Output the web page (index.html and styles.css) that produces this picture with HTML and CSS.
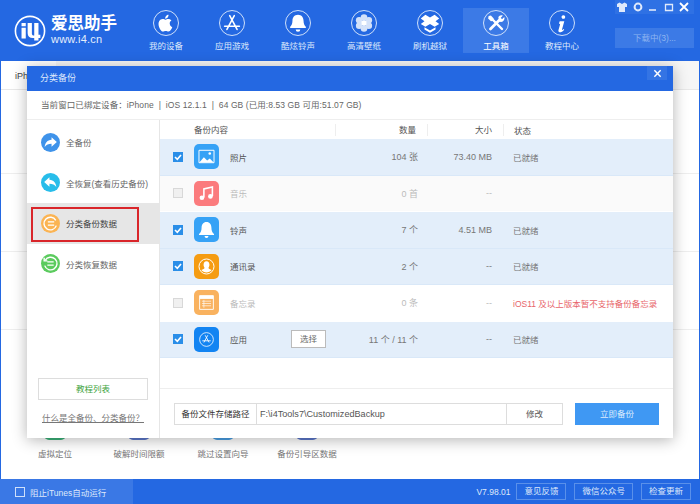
FILE: index.html
```html
<!DOCTYPE html>
<html lang="zh">
<head>
<meta charset="utf-8">
<title>爱思助手</title>
<link rel="stylesheet" href="styles.css">
</head>
<body>
<div class="app">
  <header class="top">
    <div class="logo">
      <svg class="logo-mark" viewBox="0 0 34 34"><circle cx="17" cy="17" r="15.500" fill="none" stroke="#fff" stroke-width="1.700"/><path d="M8 13.500h4.500V25H8zM8 8.500h4.500V12H8z" fill="#fff"/><path d="M14.500 8.500H19V20c0 1.500 1.200 1.800 2.500 1.800V8.500H26V21h2v3.500h-2V27h-4.500v-2.500H20c-3.500 0-5.500-1.500-5.500-5z" fill="#fff"/></svg>
      <div class="logo-text"><div class="logo-cn">爱思助手</div><div class="logo-url">www.i4.cn</div></div>
    </div>
    <nav class="nav">
      <div class="nav-item"><span class="nav-ic"><svg viewBox="0 0 26 26"><path d="M17 13.500c0-2.200 1.800-3 1.900-3.100-1-1.500-2.700-1.700-3.200-1.700-1.400-.1-2.600.8-3.300.8s-1.800-.8-3-.8c-1.500 0-3 .9-3.700 2.200-1.600 2.800-.4 6.900 1.100 9.100.8 1.100 1.700 2.300 2.900 2.300s1.600-.7 3-.7 1.800.7 3 .7 2-1.100 2.800-2.200c.9-1.300 1.200-2.500 1.300-2.600-.1 0-2.800-1.100-2.800-4zM14.800 7c.6-.8 1.100-1.800.9-2.900-.9 0-2 .6-2.600 1.400-.6.700-1.100 1.800-1 2.800 1 .1 2-.5 2.700-1.300z" fill="#fff"/></svg></span><span>我的设备</span></div>
      <div class="nav-item"><span class="nav-ic"><svg viewBox="0 0 26 26"><path d="M10.500 5l8 15M15.500 5l-8 15M5 16.500h16" fill="none" stroke="#fff" stroke-width="1.700" stroke-linecap="round"/></svg></span><span>应用游戏</span></div>
      <div class="nav-item"><span class="nav-ic"><svg viewBox="0 0 26 26"><path d="M13 4c-4 0-6 3-6 6.500 0 4-1.500 5.500-2.500 6.500v1.500h17V17c-1-1-2.500-2.500-2.500-6.500C19 7 17 4 13 4zM10.500 20a2.500 2.500 0 0 0 5 0z" fill="#fff"/></svg></span><span>酷炫铃声</span></div>
      <div class="nav-item"><span class="nav-ic"><svg viewBox="0 0 26 26"><g fill="#fff" opacity=".8"><circle cx="13" cy="7" r="3.600"/><circle cx="13" cy="19" r="3.600"/><circle cx="7.800" cy="10" r="3.600"/><circle cx="18.200" cy="10" r="3.600"/><circle cx="7.800" cy="16" r="3.600"/><circle cx="18.200" cy="16" r="3.600"/></g><circle cx="13" cy="13" r="3" fill="#fff"/></svg></span><span>高清壁纸</span></div>
      <div class="nav-item"><span class="nav-ic"><svg viewBox="0 0 26 26"><path d="M8 4l5 3 5-3 5 4-4 3 4 3-5 3-5-3-5 3-5-3 4-3-4-3z" fill="#fff"/><path d="M7 17.500l6 3.500 6-3.500V20l-6 3.500L7 20z" fill="#fff"/></svg></span><span>刷机越狱</span></div>
      <div class="nav-item active"><span class="nav-ic"><svg viewBox="0 0 26 26"><path d="M7 19.500L17.500 9" fill="none" stroke="#fff" stroke-width="3" stroke-linecap="round"/><path d="M15.500 6.500a4 4 0 0 1 5-1.500l-2.500 2.500 1.500 1.500L22 6.500a4 4 0 0 1-5.500 5z" fill="#fff"/><path d="M19.500 19.500L9.500 9.500" fill="none" stroke="#fff" stroke-width="2.600" stroke-linecap="round"/><path d="M5 5.500L7.500 5l3 3-.5 2.500-2.500.5-3-3z" fill="#fff"/></svg></span><span>工具箱</span></div>
      <div class="nav-item"><span class="nav-ic"><svg viewBox="0 0 26 26"><path d="M14.500 4.500a2 2 0 1 1-.01 0zM10.500 11h5l-2.500 9c-.2.700.3.800 1.800-.5l.6.700c-1.800 2-3.200 2.800-4.800 2.800-1.300 0-1.800-1-1.400-2.300l1.700-6.200c.2-.8-.4-.9-1.300-.6z" fill="#fff"/></svg></span><span>教程中心</span></div>
    </nav>
    <div class="win">
      <div class="win-btns">
        <svg viewBox="0 0 12 12"><path d="M3.500 1.500L1 3v3h2v5h6V6h2V3L8.500 1.500 6 3z" fill="#dfe9fb"/></svg>
        <svg viewBox="0 0 12 12"><circle cx="6" cy="6" r="3.400" fill="none" stroke="#dfe9fb" stroke-width="2"/></svg>
        <svg viewBox="0 0 12 12"><path d="M2 9h7" stroke="#dfe9fb" stroke-width="1.600"/></svg>
        <svg viewBox="0 0 12 12"><path d="M2.500 3.500h7v6h-7z" fill="none" stroke="#dfe9fb" stroke-width="1.300"/></svg>
        <svg viewBox="0 0 12 12"><path d="M2 2l8 8M10 2l-8 8" stroke="#fff" stroke-width="1.800"/></svg>
      </div>
      <div class="download">下载中(3)...</div>
    </div>
  </header>

  <main class="page">
    <div class="page-head"><div class="page-tab">iPh</div></div>
    <div class="page-rows">
      <div class="page-row"></div>
      <div class="page-row"></div>
      <div class="page-row"></div>
    </div>
    <div class="tool-labels">
      <span class="tool-label"><i class="peek peek-green"></i>虚拟定位</span>
      <span class="tool-label"><i class="peek peek-indigo"></i>破解时间限额</span>
      <span class="tool-label"><i class="peek peek-sky"></i>跳过设置向导</span>
      <span class="tool-label"><i class="peek peek-indigo"></i>备份引导区数据</span>
    </div>
  </main>

  <footer class="bottom">
    <div class="itunes"><i class="box"></i><span>阻止iTunes自动运行</span></div>
    <div class="bottom-right">
      <span class="version">V7.98.01</span>
      <span class="bottom-btn">意见反馈</span>
      <span class="bottom-btn">微信公众号</span>
      <span class="bottom-btn">检查更新</span>
    </div>
  </footer>

  <section class="modal">
    <div class="modal-title"><span>分类备份</span><span class="modal-close"><svg viewBox="0 0 10 10"><path d="M1.500 1.500l7 7M8.500 1.500l-7 7" stroke="#fff" stroke-width="1.600"/></svg></span></div>
    <div class="modal-info">当前窗口已绑定设备：iPhone&nbsp; |&nbsp; iOS 12.1.1&nbsp; |&nbsp; 64 GB (已用:8.53 GB 可用:51.07 GB)</div>
    <div class="modal-body">
      <aside class="side">
        <div class="side-item"><span class="side-ic ic-blue"><svg viewBox="0 0 18 18"><path d="M10 4l5 4.500-5 4.500v-2.800c-3 0-5 .8-6.500 3 .3-3.500 2.500-6.500 6.500-6.700z" fill="#fff"/></svg></span><span>全备份</span></div>
        <div class="side-item"><span class="side-ic ic-cyan"><svg viewBox="0 0 18 18"><path d="M8 4L3 8.500 8 13v-2.800c3 0 5 .8 6.500 3-.3-3.500-2.500-6.500-6.500-6.700z" fill="#fff"/></svg></span><span>全恢复(查看历史备份)</span></div>
        <div class="side-item current"><span class="side-ic ic-orange"><svg viewBox="0 0 18 18"><path d="M14 6a6 6 0 1 0 .5 5" fill="none" stroke="#fff" stroke-width="1.300"/><path d="M6.500 7.500h6M6.500 10.500h6" stroke="#fff" stroke-width="1.300"/></svg></span><span>分类备份数据</span></div>
        <div class="side-item"><span class="side-ic ic-green"><svg viewBox="0 0 18 18"><path d="M4 6a6 6 0 1 1-.5 5" fill="none" stroke="#fff" stroke-width="1.300"/><path d="M6 7.500h6M6 10.500h6M3 3.500v3h3" fill="none" stroke="#fff" stroke-width="1.300"/></svg></span><span>分类恢复数据</span></div>
        <div class="side-foot">
          <div class="tutorial">教程列表</div>
          <a class="what">什么是全备份、分类备份？</a>
        </div>
      </aside>
      <div class="content">
        <div class="thead">
          <span class="h-name">备份内容</span>
          <span class="h-col h-count">数量</span>
          <span class="h-col h-size">大小</span>
          <span class="h-state">状态</span>
        </div>
        <div class="row on">
          <i class="check"><svg viewBox="0 0 10 10"><path d="M2 5l2.300 2.300L8 3" fill="none" stroke="#fff" stroke-width="1.600"/></svg></i>
          <span class="app-ic a-blue"><svg viewBox="0 0 26 26"><path d="M1.500 3.500h23v19h-23z" fill="none" stroke="#fff" stroke-width="1.500"/><path d="M2 22l7-8 5 5 4-3 6 6z" fill="#fff"/><circle cx="18" cy="8.500" r="2" fill="#fff"/></svg></span>
          <span class="r-name">照片</span>
          <span class="c-count">104 张</span>
          <span class="c-size">73.40 MB</span>
          <span class="c-state">已就绪</span>
        </div>
        <div class="row off grey">
          <i class="check"></i>
          <span class="app-ic a-red"><svg viewBox="0 0 26 26"><path d="M9 19V6l13-3v14" fill="none" stroke="#fff" stroke-width="2.400"/><circle cx="6" cy="19.500" r="3.600" fill="#fff"/><circle cx="19" cy="17.500" r="3.600" fill="#fff"/></svg></span>
          <span class="r-name">音乐</span>
          <span class="c-count">0 首</span>
          <span class="c-size">--</span>
          <span class="c-state"></span>
        </div>
        <div class="row on">
          <i class="check"><svg viewBox="0 0 10 10"><path d="M2 5l2.300 2.300L8 3" fill="none" stroke="#fff" stroke-width="1.600"/></svg></i>
          <span class="app-ic a-blue"><svg viewBox="0 0 26 26"><path d="M13 1.500c-5 0-7.500 4-7.500 8.500 0 5-1.500 8-4 10v1.500h23V20c-2.500-2-4-5-4-10 0-4.500-2.500-8.500-7.500-8.500zM10 23a3 3 0 0 0 6 0z" fill="#fff"/></svg></span>
          <span class="r-name">铃声</span>
          <span class="c-count">7 个</span>
          <span class="c-size">4.51 MB</span>
          <span class="c-state">已就绪</span>
        </div>
        <div class="row on">
          <i class="check"><svg viewBox="0 0 10 10"><path d="M2 5l2.300 2.300L8 3" fill="none" stroke="#fff" stroke-width="1.600"/></svg></i>
          <span class="app-ic a-amber"><svg viewBox="0 0 26 26"><circle cx="13" cy="13" r="11.500" fill="none" stroke="#fff" stroke-width="1.500"/><path d="M13 5c-3 0-4.500 2.500-4.500 5.500 0 2 1 3.500 1.500 4.500 0 1.500-2 2-5 3.500 2 2.500 5 3.500 8 3.500s6-1 8-3.500c-3-1.500-5-2-5-3.500.5-1 1.500-2.500 1.500-4.500C17.500 7.500 16 5 13 5z" fill="#fff"/></svg></span>
          <span class="r-name">通讯录</span>
          <span class="c-count">2 个</span>
          <span class="c-size">--</span>
          <span class="c-state">已就绪</span>
        </div>
        <div class="row off">
          <i class="check"></i>
          <span class="app-ic a-peach"><svg viewBox="0 0 26 26"><path d="M2.500 2.500h21v21h-21z" fill="none" stroke="#fff" stroke-width="1.400"/><path d="M2.500 2.500h21v5h-21z" fill="#fff"/><path d="M6 11h14M6 14.500h14M6 18h14M9 9v12" stroke="#fff"/></svg></span>
          <span class="r-name">备忘录</span>
          <span class="c-count">0 条</span>
          <span class="c-size">--</span>
          <span class="c-state warn">iOS11 及以上版本暂不支持备份备忘录</span>
        </div>
        <div class="row on">
          <i class="check"><svg viewBox="0 0 10 10"><path d="M2 5l2.300 2.300L8 3" fill="none" stroke="#fff" stroke-width="1.600"/></svg></i>
          <span class="app-ic a-deep"><svg viewBox="0 0 26 26"><circle cx="13" cy="13" r="10.500" fill="none" stroke="#fff" stroke-width="1.200"/><path d="M11 6.500l6 11M15 6.500l-6 11M6.500 15h13" fill="none" stroke="#fff" stroke-width="1.300"/></svg></span>
          <span class="r-name r-narrow">应用</span>
          <span class="pick">选择</span>
          <span class="c-count c-count-wide">11 个 / 11 个</span>
          <span class="c-size">--</span>
          <span class="c-state">已就绪</span>
        </div>
        <div class="path-bar">
          <div class="path">
            <span class="path-label">备份文件存储路径</span>
            <span class="path-value">F:\i4Tools7\CustomizedBackup</span>
            <span class="path-edit">修改</span>
          </div>
          <div class="start">立即备份</div>
        </div>
      </div>
    </div>
  </section>
</div>
</body>
</html>
```

FILE: styles.css
```css
* { box-sizing: border-box; }
html, body { margin: 0; padding: 0; }
body { font-family: "Liberation Sans", "Noto Sans CJK SC", sans-serif; color: #555; }
i { display: block; font-style: normal; }
svg { display: block; }

.app { position: relative; width: 700px; height: 504px; display: flex; flex-direction: column; overflow: hidden; background: #2468e2; }

.top { height: 61px; background: #2468e2; display: flex; flex: none; color: #fff; }
.logo { width: 133px; flex: none; display: flex; align-items: center; gap: 5px; padding-left: 14px; }
.logo-mark { width: 32px; height: 32px; flex: none; }
.logo-cn { font-size: 16.500px; line-height: 17px; font-weight: 700; white-space: nowrap; }
.logo-url { font-size: 11px; line-height: 13px; margin-top: 1px; letter-spacing: .2px; color: #e4eefc; }
.nav { display: flex; width: 462px; flex: none; padding-top: 8px; }
.nav-item { width: 66px; height: 45px; display: flex; flex-direction: column; align-items: center; gap: 4px; font-size: 8.500px; line-height: 12px; color: #dfe9fb; padding-top: 2px; white-space: nowrap; }
.nav-item.active { background: #3c7ae6; color: #fff; }
.nav-ic { width: 26px; height: 26px; border: 1px solid #cfe0fa; border-radius: 50%; display: block; flex: none; overflow: hidden; }
.nav-ic svg { width: 24px; height: 24px; }
.win { flex: 1; display: flex; flex-direction: column; align-items: flex-end; padding-right: 6px; }
.win-btns { width: 79px; height: 14px; background: #2f71e4; display: flex; justify-content: space-between; align-items: center; padding: 0 4px 0 1px; }
.win-btns svg { width: 12px; height: 12px; }
.download { width: 79px; height: 20px; margin-top: 14px; background: #3c7ae6; color: #8fb5f1; font-size: 8.500px; line-height: 20px; text-align: center; }

.page { flex: 1; min-height: 0; background: #fff; margin: 0 1px; display: flex; flex-direction: column; }
.page-head { height: 29px; flex: none; background: #f6f6f6; border-bottom: 1px solid #e8e8e8; display: flex; }
.page-tab { width: 55px; background: #fff; padding: 9px 0 0 14px; font-size: 9px; line-height: 12px; color: #444; }
.page-rows { padding-top: 6px; }
.page-row { height: 78px; border-bottom: 1px solid #eee; }
.tool-labels { margin-top: auto; padding: 0 0 19px 12px; display: flex; color: #777; font-size: 8.500px; line-height: 12px; }
.tool-label { width: 84px; position: relative; text-align: center; white-space: nowrap; }
.peek { position: absolute; left: 50%; margin-left: -11px; top: -13px; width: 22px; height: 5px; border-radius: 0 0 11px 11px; }
.peek-green { background: #3cb37a; }
.peek-indigo { background: #5c78cc; }
.peek-sky { background: #4aa0e6; }

.bottom { height: 25px; flex: none; background: #2468e2; display: flex; color: #dfe9fb; font-size: 8.500px; }
.itunes { width: 133px; background: #3a78e5; display: flex; align-items: center; gap: 5px; padding-left: 15px; white-space: nowrap; }
.box { width: 10px; height: 10px; border: 1px solid #cfe0fa; flex: none; }
.bottom-right { flex: 1; display: flex; justify-content: flex-end; align-items: center; gap: 8px; padding-right: 9px; }
.version { margin-right: -2px; }
.bottom-btn { height: 17px; line-height: 15px; border: 1px solid #5a90ea; padding: 0 7px; white-space: nowrap; }

.modal { position: absolute; left: 27px; top: 66px; width: 646px; height: 372px; background: #fff; box-shadow: 0 2px 14px rgba(0,0,0,.3); display: flex; flex-direction: column; }
.modal-title { height: 25px; flex: none; background: #2468e2; color: #dfe9fb; font-size: 9px; line-height: 25px; padding-left: 13px; display: flex; justify-content: space-between; }
.modal-close { width: 20px; height: 14px; background: #3474e4; margin-right: 6px; display: flex; align-items: center; justify-content: center; }
.modal-close svg { width: 9px; height: 9px; }
.modal-info { height: 29px; flex: none; font-size: 8.500px; letter-spacing: .08px; line-height: 29px; color: #666; padding-left: 14px; border-bottom: 1px solid #eee; white-space: nowrap; }
.modal-body { flex: 1; min-height: 0; display: flex; }

.side { width: 133px; flex: none; border-right: 1px solid #e6e6e6; display: flex; flex-direction: column; padding-top: 2px; }
.side-item { height: 40.500px; flex: none; display: flex; align-items: center; gap: 6px; padding-left: 14px; font-size: 8.500px; color: #666; white-space: nowrap; position: relative; }
.side-item.current { background: #e6e6e6; color: #444; }
.side-item.current::after { content: ""; position: absolute; left: 4px; top: 4px; width: 104px; height: 31px; border: 2px solid #d9252a; }
.side-ic { width: 19px; height: 19px; border-radius: 50%; flex: none; display: block; }
.side-ic svg { width: 19px; height: 19px; }
.ic-blue { background: #3f93ea; }
.ic-cyan { background: #28bdea; }
.ic-orange { background: #fbb453; }
.ic-green { background: #5bcb5e; }
.side-foot { margin-top: auto; padding: 0 11px 14px; display: flex; flex-direction: column; align-items: center; gap: 12px; }
.tutorial { width: 110px; height: 22px; border: 1px solid #ddd; text-align: center; color: #3ba33b; font-size: 8.500px; line-height: 20px; }
.what { font-size: 8.500px; color: #777; text-decoration: underline; line-height: 12px; white-space: nowrap; }

.content { flex: 1; min-width: 0; display: flex; flex-direction: column; }
.thead { height: 19px; flex: none; display: flex; align-items: center; font-size: 8.500px; color: #555; }
.h-name { margin-left: 34px; width: 142px; border-right: 1px solid #eee; line-height: 12px; }
.h-col { text-align: right; padding-right: 11px; border-right: 1px solid #eee; line-height: 12px; }
.h-count { width: 92px; }
.h-size { width: 76px; }
.h-state { margin-left: 10px; }

.row { height: 36.500px; flex: none; display: flex; align-items: center; padding-left: 13px; font-size: 9px; color: #777; border-bottom: 1px solid #d9e8f8; }
.row.on { background: #e3eefa; }
.row.on .r-name { color: #555; }
.row.off { background: #fff; border-bottom-color: #fff; color: #bbb; }
.row.grey { background: #fafafa; }
.check { width: 10px; height: 10px; flex: none; background: #2a8ee8; }
.off .check { background: #f0f0f0; border: 1px solid #d8d8d8; }
.check svg { width: 10px; height: 10px; }
.app-ic { width: 25px; height: 25px; margin-left: 11px; border-radius: 5px; flex: none; display: flex; align-items: center; justify-content: center; }
.app-ic svg { width: 17px; height: 17px; }
.a-blue { background: #36a2f6; }
.a-red { background: #fb7b7d; }
.a-amber { background: #f59c12; }
.a-peach { background: #f9b25f; }
.a-deep { background: #1284f2; }
.r-name { width: 104px; margin-left: 11px; flex: none; font-size: 8.500px; }
.r-narrow { width: 61px; }
.pick { width: 35px; height: 18px; border: 1px solid #bbb; background: #fff; text-align: center; font-size: 8.500px; line-height: 16px; color: #666; flex: none; }
.c-count { width: 84px; flex: none; text-align: right; white-space: nowrap; }
.c-count-wide { width: 92px; margin-left: 0; }
.c-size { width: 74px; flex: none; text-align: right; }
.c-state { margin-left: 21px; font-size: 8.500px; white-space: nowrap; }
.warn { color: #e8656a; }

.path-bar { margin-top: auto; height: 50px; flex: none; border-top: 1px solid #eee; display: flex; align-items: center; padding-left: 14px; gap: 12px; }
.path { width: 389px; height: 22px; border: 1px solid #ddd; display: flex; font-size: 8.500px; line-height: 20px; }
.path-label { width: 82px; border-right: 1px solid #ddd; text-align: center; color: #333; flex: none; white-space: nowrap; }
.path-value { flex: 1; padding-left: 3px; color: #555; font-size: 9.100px; white-space: nowrap; }
.path-edit { width: 56px; border-left: 1px solid #ddd; text-align: center; color: #555; flex: none; }
.start { width: 84px; height: 22px; background: #3f98f3; color: #dcecfd; font-size: 8.500px; line-height: 22px; text-align: center; }
```
